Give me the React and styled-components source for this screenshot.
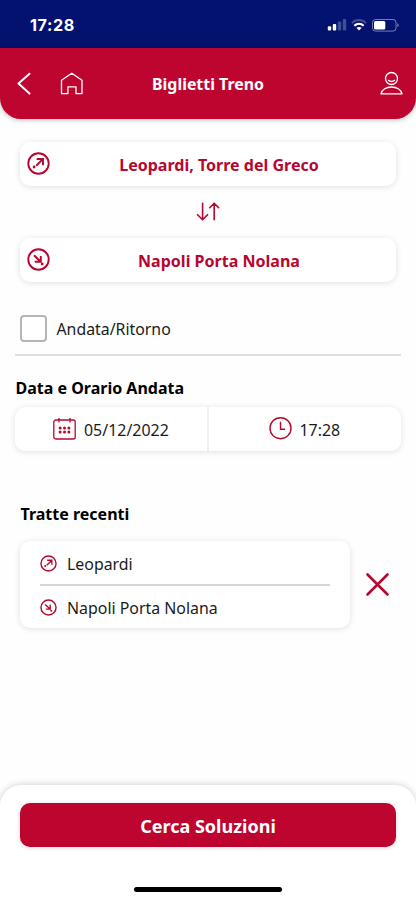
import React from 'react';
import styled, { createGlobalStyle } from 'styled-components';

const red = '#be052f';
const iconRed = '#b5072f';

const GlobalStyle = createGlobalStyle`
  * { box-sizing: border-box; }
  body { margin: 0; background: #fefefe; font-family: 'Noto Sans', sans-serif; color: #1b1b1b; }
  button { font: inherit; border: 0; padding: 0; background: none; color: inherit; }
  svg { display: block; flex: none; overflow: visible; }
`;

const Screen = styled.div`
  width: 416px;
  height: 900px;
  display: flex;
  flex-direction: column;
  overflow: hidden;
  background: #fefefe;
`;

const Top = styled.div`
  background: #03126f;
  height: 48px;
  flex: none;
  display: flex;
  align-items: center;
  justify-content: space-between;
  padding: 2px 17px 0 30px;
`;

const Clock = styled.span`
  font: 700 16.2px/20px Inter, sans-serif;
  letter-spacing: 0.6px;
  color: #fff;
`;

const StatusIcons = styled.div`
  display: flex;
  align-items: center;
  gap: 5px;
`;

const Header = styled.header`
  height: 71px;
  flex: none;
  display: grid;
  grid-template-columns: 136px 1fr 136px;
  align-items: center;
  background: ${red};
  color: #fff;
  border-radius: 0 0 21px 21px;
  box-shadow: 0 1px 5px rgba(0, 0, 0, 0.26);
`;

const HeaderActions = styled.div`
  display: flex;
  align-items: center;
  gap: 28px;
  padding: 0 ${(p) => (p.$end ? 13 : 17)}px;
  justify-content: ${(p) => (p.$end ? 'flex-end' : 'flex-start')};
`;

const Title = styled.h1`
  margin: 0;
  font-size: 15.9px;
  line-height: 22px;
  font-weight: 700;
  text-align: center;
  white-space: nowrap;
`;

const Main = styled.main`
  flex: 1;
  display: flex;
  flex-direction: column;
  padding: 23px 20px 0;
`;

const cardShadow = '0 1px 6px rgba(0, 0, 0, 0.12)';

const StationField = styled.button`
  height: 44px;
  flex: none;
  display: grid;
  grid-template-columns: 29px 1fr 14px;
  align-items: center;
  padding: 0 0 1px 7px;
  border-radius: 10px;
  background: #fff;
  box-shadow: ${cardShadow};
  color: ${iconRed};
`;

const StationName = styled.span`
  font-size: 16.05px;
  line-height: 22px;
  font-weight: 700;
  padding-top: 3px;
`;

const Swap = styled.button`
  height: 52px;
  flex: none;
  display: flex;
  justify-content: center;
  align-items: center;
`;

const ReturnOption = styled.label`
  display: flex;
  align-items: center;
  height: 74px;
  margin: 0 -5px;
  padding: 21px 5px 0;
  gap: 9.5px;
  border-bottom: 2px solid #dedede;
  font-size: 15.85px;
`;

const CheckBox = styled.input`
  appearance: none;
  margin: 0;
  width: 27px;
  height: 27px;
  border: 2px solid #b5b5b5;
  border-radius: 4px;
  background: #fff;
`;

const SectionTitle = styled.h2`
  margin: ${(p) => p.$margin};
  font-size: 16px;
  line-height: 22px;
  font-weight: 700;
  color: #000;
`;

const DateTime = styled.div`
  display: grid;
  grid-template-columns: 192px 194px;
  height: 44px;
  flex: none;
  margin: 0 -5px;
  border-radius: 10px;
  background: #fff;
  box-shadow: ${cardShadow};
`;

const Picker = styled.button`
  display: flex;
  align-items: center;
  padding: 0 0 1px ${(p) => p.$inset}px;
  gap: 8px;
  font-size: 15.95px;
  color: #1b1b1b;

  & + & { border-left: 2px solid #efefef; }
  span { padding-top: 2px; }
`;

const RecentRow = styled.div`
  display: flex;
  align-items: center;
  gap: 16px;
`;

const RecentCard = styled.div`
  width: 330px;
  height: 87px;
  padding: 0 20px;
  border-radius: 10px;
  background: #fff;
  box-shadow: ${cardShadow};
`;

const RecentStop = styled.div`
  display: flex;
  align-items: center;
  gap: 10px;
  height: ${(p) => (p.$first ? 45 : 42)}px;
  border-bottom: ${(p) => (p.$first ? '2px solid #d6d6d6' : '0')};
  padding-top: ${(p) => (p.$first ? 1 : 0)}px;
  font-size: 15.9px;

  span { padding-top: 1px; }
`;

const Footer = styled.footer`
  height: 115px;
  flex: none;
  display: flex;
  flex-direction: column;
  align-items: center;
  padding: 18px 20px 0;
  border-radius: 21px 21px 0 0;
  background: #fff;
  box-shadow: 0 -1px 6px rgba(0, 0, 0, 0.16);
`;

const SearchButton = styled.button`
  width: 100%;
  height: 44px;
  border-radius: 10px;
  background: ${red};
  color: #fff;
  font-size: 18px;
  font-weight: 700;
  padding-top: 1px;
  box-shadow: 0 1px 5px rgba(0, 0, 0, 0.14);
`;

const HomeIndicator = styled.div`
  width: 148px;
  height: 5px;
  border-radius: 3px;
  margin-top: 40px;
  background: #000;
`;

function Signal() {
  return (
    <svg width="19" height="12" viewBox="0 0 19 12" fill="#fff">
      <rect x="0.800" y="7.2" width="3.4" height="4.4" rx="1" />
      <rect x="5.800" y="5" width="3.4" height="6.6" rx="1" />
      <g opacity=".25">
        <rect x="10.800" y="2.6" width="3.4" height="9" rx="1" />
        <rect x="15.800" y="0" width="3.4" height="11.6" rx="1" />
      </g>
    </svg>
  );
}

function Wifi() {
  return (
    <svg width="16" height="12" viewBox="0 0 16 12" fill="none" stroke="#fff">
      <path d="M.9 4.1C5 .1 11 .1 15.100 4.100" strokeWidth="2" opacity=".25" />
      <path d="M3.300 6.700C6.100 4.200 9.900 4.200 12.700 6.700" strokeWidth="2.200" />
      <path d="M5.400 8.800Q8 7 10.600 8.800L8 11.500Z" fill="#fff" stroke="none" />
    </svg>
  );
}

function Battery() {
  return (
    <svg width="27" height="13" viewBox="0 0 27 13" fill="none">
      <rect x=".5" y=".5" width="23.500" height="11.600" rx="3" stroke="#fff" opacity=".45" />
      <rect x="2" y="2" width="11.300" height="8.600" rx="1.500" fill="#fff" />
      <path d="M25.300 4.300q1.400.7 1.400 2t-1.400 2z" fill="#fff" opacity=".45" />
    </svg>
  );
}

function Back() {
  return (
    <svg width="14" height="22" viewBox="0 0 14 22" fill="none" stroke="#fff" strokeWidth="2" strokeLinecap="round" strokeLinejoin="round">
      <path d="M12.500 .7 1.500 10.600l11 10" />
    </svg>
  );
}

function Home() {
  return (
    <svg width="26" height="22" viewBox="0 0 26 22" fill="none" stroke="#fff" strokeWidth="1.300" strokeLinejoin="round">
      <path d="M2.500 7.300 12.800.3 23 7.300V20.600H17V13.800H8.900V20.600H2.500Z" />
    </svg>
  );
}

function Profile() {
  return (
    <svg width="23" height="23" viewBox="0 0 23 23" fill="none" stroke="#fff" strokeWidth="1.300" strokeLinejoin="round">
      <circle cx="11.500" cy="6.500" r="6" />
      <path d="M8 7.900q3.500 3.200 7 0M1 21.900C2.500 12.700 20.500 12.700 22 21.900Z" />
    </svg>
  );
}

function StopIcon({ arrival, size, color = iconRed }) {
  return (
    <svg width={size} height={size} viewBox="0 0 23 23" fill="none" stroke={color} strokeWidth="1.900">
      <circle cx="11.500" cy="11.500" r="10.200" />
      {arrival ? (
        <>
          <path d="m7 7.300 6.200 6M7.800 13.700h6V7.900" />
          <circle cx="15.200" cy="16" r="1.400" fill={color} stroke="none" />
        </>
      ) : (
        <>
          <path d="m9.200 13.700 6.400-6.300M9.700 7h6.300v6.200" />
          <circle cx="7.100" cy="15" r="1.400" fill={color} stroke="none" />
        </>
      )}
    </svg>
  );
}

function SwapIcon() {
  return (
    <svg width="24" height="20" viewBox="0 0 24 20" fill="none" stroke={iconRed} strokeWidth="1.600" strokeLinecap="round" strokeLinejoin="round">
      <path d="M6.600 1.300V17.600M1.600 12.700l5 5 5-5M18.200 17.700V1.300M13.700 5.700l4.500-4.500 4.500 4.500" />
    </svg>
  );
}

function Calendar() {
  const dots = [10, 14].flatMap((y) => [7.1, 11.500, 15.9].map((x) => [x, y]));
  return (
    <svg width="23" height="22" viewBox="0 0 23 22" fill="none" stroke={iconRed} strokeWidth="1.300">
      <rect x=".8" y="2" width="21.400" height="19" rx="2" />
      <path d="M6 0v4.500M17 0v4.500" />
      {dots.map(([x, y]) => (
        <circle key={`${x}-${y}`} cx={x} cy={y} r="1.500" fill={iconRed} stroke="none" />
      ))}
    </svg>
  );
}

function Time() {
  return (
    <svg width="23" height="23" viewBox="0 0 23 23" fill="none" stroke={iconRed} strokeWidth="1.400">
      <circle cx="11.500" cy="11.200" r="10.500" />
      <path d="M11.500 4.800v7.500H16" />
    </svg>
  );
}

function Remove() {
  return (
    <svg width="23" height="23" viewBox="0 0 23 23" stroke={iconRed} strokeWidth="2.600" strokeLinecap="round">
      <path d="m1.500 1.500 20 20M21.500 1.500l-20 20" />
    </svg>
  );
}

export default function App() {
  return (
    <>
      <GlobalStyle />
      <Screen>
        <Top>
          <Clock>17:28</Clock>
          <StatusIcons>
            <Signal />
            <Wifi />
            <Battery />
          </StatusIcons>
        </Top>
        <Header>
          <HeaderActions>
            <Back />
            <Home />
          </HeaderActions>
          <Title>Biglietti Treno</Title>
          <HeaderActions $end>
            <Profile />
          </HeaderActions>
        </Header>
        <Main>
          <StationField>
            <StopIcon size={23} />
            <StationName>Leopardi, Torre del Greco</StationName>
          </StationField>
          <Swap aria-label="Inverti">
            <SwapIcon />
          </Swap>
          <StationField>
            <StopIcon arrival size={23} />
            <StationName>Napoli Porta Nolana</StationName>
          </StationField>
          <ReturnOption>
            <CheckBox type="checkbox" />
            Andata/Ritorno
          </ReturnOption>
          <SectionTitle $margin="21px -4.5px 8px">Data e Orario Andata</SectionTitle>
          <DateTime>
            <Picker $inset={38}>
              <Calendar />
              <span>05/12/2022</span>
            </Picker>
            <Picker $inset={59.5}>
              <Time />
              <span>17:28</span>
            </Picker>
          </DateTime>
          <SectionTitle $margin="52px 0.5px 16px">Tratte recenti</SectionTitle>
          <RecentRow>
            <RecentCard>
              <RecentStop $first>
                <StopIcon size={17} />
                <span>Leopardi</span>
              </RecentStop>
              <RecentStop>
                <StopIcon arrival size={17} />
                <span>Napoli Porta Nolana</span>
              </RecentStop>
            </RecentCard>
            <button aria-label="Rimuovi">
              <Remove />
            </button>
          </RecentRow>
        </Main>
        <Footer>
          <SearchButton>Cerca Soluzioni</SearchButton>
          <HomeIndicator />
        </Footer>
      </Screen>
    </>
  );
}
